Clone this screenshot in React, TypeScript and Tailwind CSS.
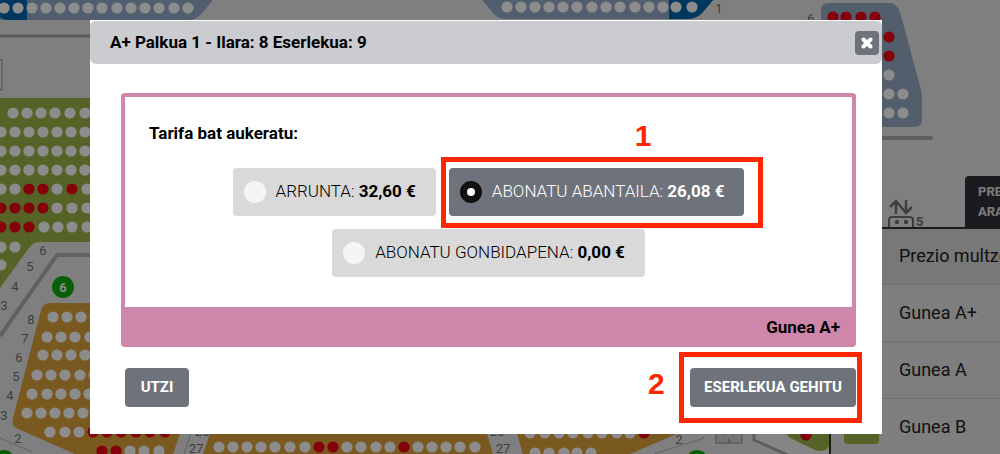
import React, { useState } from 'react';
import { clsx } from 'clsx';

// Each row is a y position plus the x positions of the free and taken seats
interface SeatRow {
  y: number;
  free?: number[];
  taken?: number[];
}

const SEAT_ROWS: SeatRow[] = [
  // Upper stand
  { y: 8, free: [4, 18, 32, 46, 60, 74, 88, 102, 117, 131, 145, 159, 174, 188] },
  { y: 7, free: [507, 521, 535, 549, 563, 577, 592, 606, 620, 635, 649, 663, 676, 692] },
  // Upper right box
  { y: 17, taken: [833, 846, 861, 875] },
  { y: 37, taken: [889] },
  { y: 56, taken: [889] },
  { y: 75, free: [889] },
  { y: 94, free: [889, 903] },
  { y: 113, free: [889, 903] },
  // Green stand
  { y: 113, free: [13, 27, 41, 55, 70, 85] },
  { y: 132, free: [1, 15, 29, 43, 57, 71, 85] },
  { y: 151, free: [1, 15, 29, 43, 57, 71, 85] },
  { y: 170, free: [1, 15, 29, 43, 57, 71, 85] },
  { y: 189, free: [1, 15, 57, 87], taken: [29, 43, 72] },
  { y: 208, free: [57, 72, 87], taken: [1, 15, 29, 43] },
  { y: 227, free: [44, 58, 72, 87], taken: [1, 15, 29] },
  { y: 247, free: [1, 15] },
  { y: 265, free: [1] },
  // Orange stand, sector 6
  { y: 317, free: [53, 67, 81, 95] },
  { y: 337, free: [47, 61, 75, 90] },
  { y: 355, free: [43, 57, 71, 85] },
  { y: 375, free: [37, 51, 65, 80, 94] },
  { y: 394, free: [32, 47, 61, 75, 89] },
  { y: 413, free: [27, 41, 55, 69, 83] },
  { y: 432, free: [50, 65, 79], taken: [93, 107, 121, 136, 150, 165] },
  { y: 451, free: [130, 144, 159], taken: [102, 116] },
  // Lower stands
  {
    y: 447,
    free: [219, 233, 247, 261, 275, 290, 305, 347, 361, 376, 390, 418, 432, 446, 460, 475],
    taken: [319, 333, 404],
  },
  { y: 433, free: [530, 545, 559, 573, 588, 602, 617, 630], taken: [644] },
  { y: 453, free: [535, 549, 564, 577, 591] },
  { y: 435, taken: [806] },
];

const ROW_NUMBERS: [number, number, string][] = [
  [719, 13, '1'],
  [811, 23, '6'],
  [43, 255, '6'],
  [30, 271, '5'],
  [15, 291, '4'],
  [4, 310, '3'],
  [31, 324, '8'],
  [25, 343, '7'],
  [19, 362, '6'],
  [16, 381, '5'],
  [10, 400, '4'],
  [4, 420, '3'],
  [18, 443, '2'],
  [202, 436, '26'],
  [196, 453, '27'],
  [497, 436, '26'],
  [503, 453, '27'],
  [679, 444, '2'],
];

const SeatMap: React.FC = () => (
  <svg className="block w-full" viewBox="0 0 1000 454" role="img" aria-label="Eserlekuen mapa">
    {/* Upper stand */}
    <path d="M0 0H213L203 12Q197 20 188 20H0Z" fill="#96accb" />
    <path d="M0 0H27V20H7Q3 20 0 17Z" fill="#0064ae" />
    <path d="M482 0H713L703 12Q697 19 688 19H506Q498 19 493 13Z" fill="#96accb" />
    <path d="M669 0H713L703 12Q697 19 688 19H669Z" fill="#0064ae" />
    <path d="M0 36H95" stroke="#a3a3a3" strokeWidth="3" />
    <rect x="-20" y="60" width="22" height="30" fill="none" stroke="#929292" />
    <path d="M828 3H889Q897 3 900 12L920 86Q922 92 922 98V120Q922 127 914 127H821V10Q821 3 828 3Z" fill="#96abc5" />
    <path d="M860 138H931" stroke="#ababab" strokeWidth="4" strokeLinecap="round" />

    {/* Green stand */}
    <path d="M0 98H100V242H40Q33 242 29 248L0 288Z" fill="#9db547" />
    <path d="M0 336L57 255H100" fill="none" stroke="#b0b0b0" strokeWidth="4" />

    {/* Orange stands */}
    <path d="M50 303H180V434L173 454H75L16 428Q11 425 13 418L41 310Q43 303 50 303Z" fill="#dfa33d" />
    <path d="M211 430H486L493 454H203Z" fill="#dfa33d" />
    <path d="M516 430H686L630 454H523Z" fill="#dfa33d" />
    <path d="M0 438L32 452M192 430L184 454M654 454L704 438" fill="none" stroke="#b0b0b0" />

    {/* Lower right corner */}
    <rect x="716" y="420" width="26" height="23" fill="#d4d4d4" stroke="#8c8c8c" />
    <path d="M729 439V443M724 433V435M733 433V435" stroke="#777" />
    <path d="M754 430V440L790 456H829V430Z" fill="#f2f2f2" />
    <path d="M754 430V440L790 456" fill="none" stroke="#acacac" strokeWidth="3" />
    <path d="M783 430H829V446Q826 453 815 450L790 438Z" fill="#9db547" />

    {SEAT_ROWS.map((row, i) => (
      <g key={i}>
        {row.free?.map((x) => <circle key={x} cx={x} cy={row.y} r="5.6" fill="#fff" />)}
        {row.taken?.map((x) => <circle key={x} cx={x} cy={row.y} r="5.6" fill="#f00014" />)}
      </g>
    ))}

    <g fill="#717171" fontFamily="Roboto, sans-serif" fontSize="13" textAnchor="middle">
      {ROW_NUMBERS.map(([x, y, label]) => (
        <text key={`${x}-${y}`} x={x} y={y}>{label}</text>
      ))}
    </g>

    {/* Sector badges */}
    <g fill="#10ae10">
      <circle cx="63" cy="287" r="11" />
      <circle cx="4" cy="461" r="11" />
      <circle cx="697" cy="461" r="11" />
    </g>
    <text x="63" y="292" fill="#fff" fontFamily="Roboto, sans-serif" fontSize="13" fontWeight="700" textAnchor="middle">6</text>

    {/* Lift */}
    <g fill="none" stroke="#717171" strokeWidth="2.5">
      <path d="M896 214V201M890 207L896 201L901 207M906 200V213M901 207L906 213L912 207" />
      <rect x="889" y="217" width="24" height="14" rx="3" strokeWidth="2" />
    </g>
    <circle cx="897" cy="222" r="2.2" fill="#717171" />
    <circle cx="906" cy="222" r="2.2" fill="#717171" />
    <text x="916" y="226" fill="#717171" fontFamily="Roboto, sans-serif" fontSize="13" fontWeight="700">5</text>
  </svg>
);

const ZONES = [
  { name: 'Gunea A+', swatch: 'bg-[#cf86ab]' },
  { name: 'Gunea A', swatch: 'bg-[#dfa33d]' },
  { name: 'Gunea B', swatch: 'bg-[#9db547]' },
];

const PricePanel: React.FC = () => (
  <aside className="absolute top-44 right-0 w-[171px] overflow-hidden">
    <button className="ml-auto block h-[51px] w-[35px] overflow-hidden rounded-tl bg-[#303238] pl-[13px] text-left text-[13px] leading-5 font-bold text-[#e0e0e0]">
      PREZIOEN ARABERA
    </button>
    <table className="w-full table-fixed border-t-2 border-l-2 border-[#333] bg-[#e6e6e6] text-left text-lg text-[#222]">
      <thead className="bg-[#dadada]">
        <tr className="h-14">
          <th className="w-[69px]" aria-label="Kolorea" />
          <th className="font-normal whitespace-nowrap">Prezio multzoa</th>
        </tr>
      </thead>
      <tbody>
        {ZONES.map((zone) => (
          <tr key={zone.name} className="h-[57px] border-t border-[#cacaca]">
            <td className="pl-[13px]">
              <div className={clsx('size-[35px] rounded', zone.swatch)} />
            </td>
            <td className="whitespace-nowrap">{zone.name}</td>
          </tr>
        ))}
      </tbody>
    </table>
  </aside>
);

const FARES = [
  { id: 'arrunta', name: 'ARRUNTA', price: '32,60 €' },
  { id: 'abantaila', name: 'ABONATU ABANTAILA', price: '26,08 €' },
  { id: 'gonbidapena', name: 'ABONATU GONBIDAPENA', price: '0,00 €' },
];

interface FareOptionProps {
  fare: (typeof FARES)[number];
  checked: boolean;
  onSelect: (id: string) => void;
}

const FareOption: React.FC<FareOptionProps> = ({ fare, checked, onSelect }) => (
  <label
    className={clsx(
      'flex h-12 cursor-pointer items-center gap-2.5 rounded pr-5 pl-[11px] text-[17px] whitespace-nowrap',
      checked ? 'bg-[#6e737b] text-white' : 'bg-[#d9d9d9] text-black'
    )}
  >
    <input
      type="radio"
      name="fare"
      value={fare.id}
      checked={checked}
      onChange={() => onSelect(fare.id)}
      className="size-[22px] shrink-0 appearance-none rounded-full bg-[#f5f5f5] checked:border-[7px] checked:border-[#111] checked:bg-white"
    />
    <span className="font-light">
      {fare.name}: <strong className="font-bold">{fare.price}</strong>
    </span>
  </label>
);

const SeatDialog: React.FC = () => {
  const [fareId, setFareId] = useState('abantaila');

  return (
    <section role="dialog" aria-labelledby="dialog-title" className="w-full bg-white pb-[27px] text-black">
      <header className="flex h-11 items-center justify-between rounded-md border-t border-white bg-[#cbccd0] pr-[3px] pl-5">
        <h2 id="dialog-title" className="text-[17px] font-bold">A+ Palkua 1 - Ilara: 8 Eserlekua: 9</h2>
        <button aria-label="Itxi" className="flex size-6 items-center justify-center rounded bg-[#6e737b]">
          <svg className="size-3" viewBox="0 0 12 12" fill="none" stroke="#fff" strokeWidth="4" strokeLinecap="round">
            <path d="M2.5 2.5L9.5 9.5M9.5 2.5L2.5 9.5" />
          </svg>
        </button>
      </header>

      <div className="pt-[29px] pr-[26px] pl-[31px]">
        <div className="rounded border-4 border-b-0 border-[#cf86ab] bg-[#cf86ab]">
          <fieldset className="bg-white px-6 pt-6 pb-[30px]">
            <legend className="float-left w-full text-[17px] leading-6 font-bold">Tarifa bat aukeratu:</legend>
            <div className="clear-both flex flex-wrap justify-center gap-[13px] pt-[23px]">
              {FARES.map((fare) => (
                <div key={fare.id} className="relative">
                  <FareOption fare={fare} checked={fare.id === fareId} onSelect={setFareId} />
                  {fare.id === 'abantaila' && (
                    <>
                      <div className="pointer-events-none absolute -top-[11px] -right-[19px] -bottom-3 -left-2 border-[5px] border-[#ff2600]" />
                      <StepNumber className="-top-12 left-[186px]">1</StepNumber>
                    </>
                  )}
                </div>
              ))}
            </div>
          </fieldset>
          <p className="px-3 text-right text-[17px] leading-10 font-bold">Gunea A+</p>
        </div>

        <div className="flex justify-between pt-[21px] pl-1">
          <ActionButton>UTZI</ActionButton>
          <div className="relative">
            <ActionButton>ESERLEKUA GEHITU</ActionButton>
            <div className="pointer-events-none absolute -top-4 -right-1.5 -bottom-4 -left-[11px] border-[5px] border-[#ff2600]" />
            <StepNumber className="top-0 -left-[42px]">2</StepNumber>
          </div>
        </div>
      </div>
    </section>
  );
};

const StepNumber: React.FC<{ className: string; children: React.ReactNode }> = ({ className, children }) => (
  <span
    className={clsx(
      "absolute font-['Liberation_Sans',sans-serif] text-3xl leading-8 font-bold text-[#ff2600]",
      className
    )}
  >
    {children}
  </span>
);

const ActionButton: React.FC<{ children: React.ReactNode }> = ({ children }) => (
  <button className="h-[39px] min-w-16 rounded bg-[#6e737b] px-3.5 text-[15px] font-bold whitespace-nowrap text-white">
    {children}
  </button>
);

const App: React.FC = () => (
  <main className="relative min-h-screen overflow-hidden bg-[#e8e8e8] font-[Roboto,sans-serif]">
    <SeatMap />
    <PricePanel />
    <div className="absolute inset-0 flex items-start bg-black/45 pt-5 pr-[118px] pl-[90px]">
      <SeatDialog />
    </div>
  </main>
);

export default App;
